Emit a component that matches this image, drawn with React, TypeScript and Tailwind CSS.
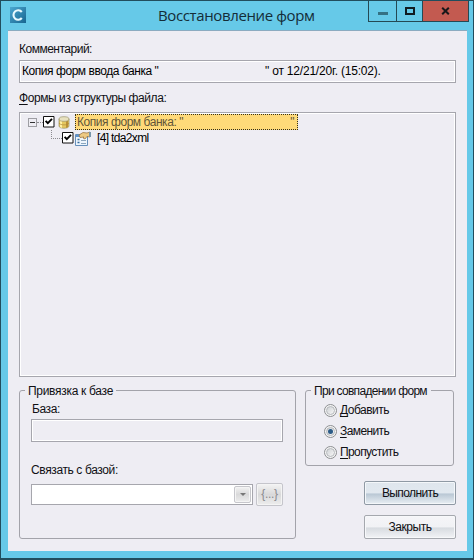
import type { ReactNode } from "react";

const inset = "border border-[#a6a6ad] shadow-[inset_0_0_0_1px_#fff] bg-[#eeedf3]";

function Radio({ mnemonic, rest, checked, spacing }: { mnemonic: string; rest: string; checked?: boolean; spacing: string }) {
  return (
    <label className="flex h-[21px] items-center gap-[3px]">
      <span className="flex size-[13px] items-center justify-center rounded-full border border-[#8d8f92] bg-[#f4f4f4]">
        <span className="flex size-[9px] items-center justify-center rounded-full border border-[#b5b8bc] bg-linear-to-br from-[#cfd2d5] to-[#f7f7f7]">
          {checked && <span className="size-[5px] rounded-full bg-[#2c5b86]" />}
        </span>
      </span>
      <span className={spacing}>
        <u className="underline-offset-2">{mnemonic}</u>
        {rest}
      </span>
    </label>
  );
}

function Group({ title, className, titleClass, children }: { title: string; className: string; titleClass: string; children: ReactNode }) {
  return (
    <section className={"relative rounded-[3px] border border-[#a3a3aa] " + className}>
      <h2 className={"absolute top-[-7px] bg-[#eeedf3] leading-[15px] " + titleClass}>{title}</h2>
      {children}
    </section>
  );
}

function Check() {
  return (
    <svg className="size-[12px] shrink-0" viewBox="0 0 12 12">
      <path d="M.5.5h10.5v10.5H.5z" fill="#fff" stroke="#111" />
      <path d="M2.6 4.8 4.8 7.2 9 2.8" fill="none" stroke="#000" strokeWidth="1.9" />
    </svg>
  );
}

function Database() {
  return (
    <svg className="h-[13px] w-[12px] shrink-0" viewBox="0 0 12 13">
      <path d="M1 3v7c0 3 10 3 10 0V3" fill="#e5c75e" stroke="#99936a" strokeWidth=".7" />
      <path d="M2 4v7l2 1V5z" fill="#fff0a4" />
      <path d="M8 5v7l2-1V4z" fill="#bc9034" />
      <ellipse cx="6" cy="3" rx="5" ry="2.3" fill="#e8e2c0" stroke="#99936a" strokeWidth=".7" />
      <path d="M1 7c1 2.5 9 2.5 10 0" fill="none" stroke="#ad8a3c" strokeWidth=".7" />
    </svg>
  );
}

function FormIcon() {
  return (
    <svg className="h-[15px] w-[17px] shrink-0" viewBox="0 0 17 15">
      <path d="M.5 3.5h12v11H.5z" fill="#edf5fc" stroke="#6690bb" />
      <path d="M1 4h11v2H1z" fill="#5d93cd" />
      <path d="M2.5 8.5h2m-2 3h2" stroke="#376c9c" strokeWidth="1.5" />
      <path d="M6 9.5h5m-5 3h5" stroke="#8ca6bd" />
      <path d="M4 4 8 1.5l4 .5 3-1v5l-3-.5L10 8 8 7l1-1-4 .5z" fill="#edc983" stroke="#956d39" strokeWidth=".7" />
      <path d="M14 1h2v5h-2z" fill="#7896aa" />
    </svg>
  );
}

export default function App() {
  return (
    <main className="flex h-[560px] w-[474px] flex-col overflow-hidden border border-b-2 border-[#214d5d] bg-[#66c9e8] pr-[6px] pb-[7px] pl-[7px] font-['Liberation_Sans',sans-serif] text-[12px] leading-[15px] text-[#101014]">
      <header className="flex h-[29px] shrink-0 items-start">
        <div className="mt-[6px] ml-[2px] flex size-[16px] items-center justify-center bg-linear-to-br from-[#4ba8d1] to-[#176690]">
          <svg className="size-[14px]" viewBox="0 0 14 14"><path d="M10.8 4A4.7 4.7 0 1 0 10.8 10" fill="none" stroke="#e9faff" strokeWidth="2.1" /></svg>
        </div>
        <h1 className="mt-[3px] ml-[132px] w-[207px] whitespace-nowrap font-['Open_Sans',sans-serif] text-[15px] leading-[22px] tracking-[-0.38px] text-[#142d38]">Восстановление форм</h1>
        <div className="mr-[-2px] ml-auto flex h-[21px] w-[101px] shrink-0 border-x border-b border-[#244954]">
          <button className="flex w-[28px] items-center justify-center border-r border-[#244954]"><span className="mt-[5px] h-[3px] w-[10px] bg-[#347184]" /></button>
          <button className="flex w-[26px] items-center justify-center border-r border-[#244954]"><span className="h-[8px] w-[10px] border-2 border-[#101c22]" /></button>
          <button className="flex flex-1 items-center justify-center bg-[#c35a50]"><svg className="h-[8px] w-[9px]" viewBox="0 0 9 8"><path d="m1.2.7 6.6 6.6m0-6.6L1.2 7.3" stroke="#191719" strokeWidth="2" /></svg></button>
        </div>
      </header>
      <div className="flex flex-1 flex-col border-t border-[#8babc0] bg-[#eeedf3] pt-[9px] pr-[9px] pl-[11px]">
        <p className="h-[20px] pt-[2px] tracking-[-0.5px]">Комментарий:</p>
        <div className={inset + " flex h-[23px] w-[437px] items-center pl-[2px] whitespace-pre text-black"}>
          <span className="w-[243px] tracking-[-0.45px]">Копия форм ввода банка "</span><span className="tracking-[-0.2px]">" от 12/21/20г. (15:02).</span>
        </div>
        <p className="mt-[8px] h-[21px] tracking-[-0.43px]"><u className="underline-offset-2">Ф</u>ормы из структуры файла:</p>
        <div className={inset + " h-[265px] w-[437px] pt-[1px] pl-[8px]"}>
          <div className="flex h-[16px] items-center">
            <span className="flex size-[9px] items-center justify-center border border-[#9e9ea3]"><span className="h-px w-[5px] bg-[#333]" /></span>
            <span className="w-[6px] border-t border-dotted border-[#8b8b90]" />
            <Check />
            <span className="ml-[3px] flex"><Database /></span>
            <span className="ml-[5px] flex h-[16px] w-[223px] items-center justify-between border border-dotted border-[#35301c] bg-[#ffda79] pl-px pr-[3px] tracking-[-0.45px] text-[#625638]"><span>Копия форм банка: "</span><span>"</span></span>
          </div>
          <div className="flex h-[16px] items-center pl-[23px]">
            <span className="mb-[7px] h-[9px] w-[11px] border-b border-l border-dotted border-[#8b8b90]" />
            <Check />
            <span className="ml-px flex"><FormIcon /></span>
            <span className="ml-[5px] tracking-[-0.65px] text-black">[4] tda2xml</span>
          </div>
        </div>
        <div className="mt-[13px] flex items-start gap-[9px]">
          <Group title="Привязка к базе" className="h-[149px] w-[277px] pt-[10px] pl-[11px]" titleClass="left-[5px] w-[91px] pl-[3px] tracking-[-0.3px]">
            <p className="h-[18px] pt-px pl-px tracking-[-0.4px]">База:</p>
            <div className={inset + " h-[23px] w-[252px]"} />
            <p className="mt-[20px] h-[21px] pt-px tracking-[-0.38px]">Связать с базой:</p>
            <div className="flex items-center gap-[3px]">
              <div className="flex h-[21px] w-[222px] items-center justify-end border border-[#a6a6ad] bg-white pr-px">
                <button className="flex h-[17px] w-[17px] items-center justify-center rounded-[2px] border border-[#c6c6cb] bg-linear-to-b from-[#f2f2f2] via-[#d9d9da] to-[#ededed] shadow-[inset_0_0_0_1px_#f4f4f4]"><span className="border-x-[3px] border-t-[3px] border-x-transparent border-t-[#777]" /></button>
              </div>
              <button className="h-[23px] w-[27px] rounded-[2px] border border-[#c5c5cb] bg-linear-to-b from-[#f4f4f4] via-[#d9d9da] to-[#ededed] tracking-[-0.3px] text-[#8a8a8f] shadow-[inset_0_0_0_1px_#f4f4f4]">{"{...}"}</button>
            </div>
          </Group>
          <div className="flex w-[151px] flex-col items-end">
            <Group title="При совпадении форм" className="mr-[2px] h-[76px] w-[149px] pt-[9px] pl-[18px]" titleClass="left-[5px] w-[120px] whitespace-nowrap pl-[3px] tracking-[-0.7px]">
              <Radio mnemonic="Д" rest="обавить" spacing="tracking-[-0.5px]" />
              <Radio mnemonic="З" rest="аменить" checked spacing="tracking-[-0.6px]" />
              <Radio mnemonic="П" rest="ропустить" spacing="tracking-[-0.6px]" />
            </Group>
            <button className="mt-[15px] h-[24px] w-[92px] rounded-[2px] border border-[#8f99a4] bg-[linear-gradient(#dfe6ed_0%,#e1e8ef_50%,#b9c7d4_54%,#e9eff4_100%)] tracking-[-0.6px] shadow-[inset_0_0_0_1px_#f4f7fa]">Выполнить</button>
            <button className="mt-[10px] h-[24px] w-[92px] rounded-[2px] border border-[#a5a8ae] bg-[linear-gradient(#f5f5f8_0%,#f1f2f5_50%,#d7dbe0_54%,#f2f3f6_100%)] tracking-[-0.45px] shadow-[inset_0_0_0_1px_#f7f8fa]">Закрыть</button>
          </div>
        </div>
      </div>
    </main>
  );
}
